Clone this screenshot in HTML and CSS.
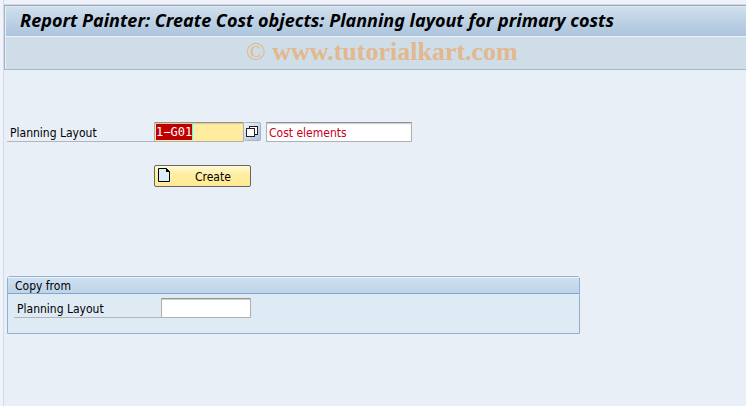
FILE: index.html
```html
<!DOCTYPE html>
<html lang="en">
<head>
<meta charset="UTF-8">
<meta name="viewport" content="width=device-width,initial-scale=1.0">
<title>Report Painter: Create Cost objects</title>
<link rel="stylesheet" href="styles.css">
</head>
<body>

<div class="window">
  <header class="header">
    <h1 class="title">Report Painter: Create Cost objects: Planning layout for primary costs</h1>
    <div class="toolbar"><span class="copy">©</span> www.tutorialkart.com</div>
  </header>

  <main class="content">
    <form>
      <div class="row">
        <label class="label" for="layout">Planning Layout</label>
        <div class="field active">
          <input type="text" id="layout" value="1−G01">
        </div>
        <button type="button" class="help" aria-label="Possible entries">
          <svg width="12" height="12" viewBox="0 0 12 12" fill="#fff" stroke="#222" shape-rendering="crispEdges">
            <path d="M3.5 .5h8v8h-8z"/>
            <path d="M.5 2.5h8v8h-8z"/>
          </svg>
        </button>
        <input type="text" class="text-out" aria-label="Description" value="Cost elements" readonly>
      </div>

      <button type="button" class="create">
        <svg width="12" height="14" viewBox="0 0 12 14">
          <path d="M.5 .5h8l3 3v10h-11z" fill="#dcedfa" stroke="#000"/>
          <path d="M8 0v4h4z" fill="#000"/>
        </svg>
        <span>Create</span>
      </button>

      <fieldset class="group">
        <legend class="group-title">Copy from</legend>
        <div class="row">
          <label class="label" for="source">Planning Layout</label>
          <input type="text" class="source" id="source">
        </div>
      </fieldset>
    </form>
  </main>
</div>

</body>
</html>
```
FILE: styles.css
```css
*{
  box-sizing:border-box;
}
body{
  margin:0;
  background:#f0f3fa;
  color:#000;
  font:12px/16px "DejaVu Sans Condensed","DejaVu Sans",sans-serif;
}
input,button{
  margin:0;
  font:inherit;
  color:inherit;
}
svg{
  display:block;
}

.window{
  min-height:100vh;
  padding-top:5px;
  margin-left:3px;
  border-left:1px solid #d0dbe6;
  background:linear-gradient(#f0f2fa 4px,#d5d8e5 4px,#d5d8e5 5px,#e8eff7 5px);
}

/* ---------- header ---------- */
.header{
  border:1px solid #a5b5c8;
  border-top-color:#9ba6bb;
  border-right:0;
  background:#cfdde8;
}
.title{
  height:30px;
  margin:0;
  padding-left:14px;
  border-top:1px solid #dfeaf3;
  border-left:1px solid #e8f0f7;
  background:linear-gradient(#cfdfec,#acc4dd);
  font-family:"Noto Sans","DejaVu Sans Condensed",sans-serif;
  font-size:18px;
  line-height:26px;
  font-weight:bold;
  font-style:italic;
  white-space:nowrap;
}
.toolbar{
  height:33px;
  padding-left:240px;
  border-top:1px solid #edf3f8;
  border-left:1px solid #e8f0f7;
  color:#e2b88c;
  font:bold 26px/30px "Liberation Serif",serif;
  white-space:nowrap;
}
.copy{
  font-weight:normal;
}

/* ---------- form ---------- */
.content{
  padding:52px 3px 16px;
}
.row{
  display:flex;
  height:20px;
}
.label{
  width:147px;
  padding:3px 3px 0;
  border-bottom:1px solid #b2b6bb;
}
.field,.text-out,.source{
  height:20px;
  border:1px solid #b0b0b0;
  border-top-color:#909295;
  border-radius:1px;
  background:#fff;
  box-shadow:inset 0 1px 1px #ccc;
}
.field{
  display:flex;
  align-items:center;
  width:90px;
  padding-left:1px;
}
.active{
  background:#ffec9e;
  box-shadow:inset 0 1px 1px #d9cb90;
}
.field input{
  width:37px;
  height:16px;
  padding:0;
  border:0;
  border-right:1px solid #5ff;
  outline:0;
  background:#c00000;
  color:#fff;
  font:12px/16px "DejaVu Sans Mono",monospace;
}
.help{
  display:flex;
  align-items:center;
  justify-content:center;
  width:17px;
  height:19px;
  padding:0;
  border:1px solid #a9b3bf;
  border-left:0;
  border-radius:2px;
  background:linear-gradient(135deg,#f2f6fa,#a9c0df);
}
.text-out{
  width:146px;
  margin-left:5px;
  padding:1px 2px 0;
  color:#c8001a;
}
.create{
  display:flex;
  align-items:center;
  width:97px;
  height:22px;
  margin:23px 0 0 147px;
  padding:0 3px;
  border:1px solid #666;
  border-radius:2px;
  background:linear-gradient(#fff9d8,#ffeea2 40%,#ffe994);
}
.create svg{
  margin-top:-2px;
}
.create span{
  padding-top:1px;
  margin-left:25px;
}

/* ---------- copy from ---------- */
.group{
  min-width:0;
  max-width:573px;
  margin:89px 0 0;
  padding:0 0 15px;
  border:1px solid #8fb0d2;
  border-radius:3px 3px 0 0;
  background:#deeaf4;
}
.group-title{
  float:left;
  width:100%;
  height:17px;
  padding:0 7px;
  border-top:1px solid #edf5fb;
  border-bottom:1px solid #83a3ca;
  background:linear-gradient(#cfdfee,#bdd4e9);
}
.group .row{
  clear:both;
  padding:4px 0 0 6px;
  height:24px;
}
.source{
  width:90px;
  padding:0 2px;
}
```
